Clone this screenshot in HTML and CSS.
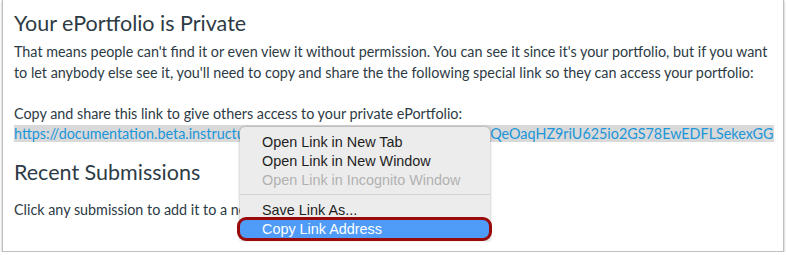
FILE: index.html
```html
<!DOCTYPE html>
<html lang="en">
<head>
    <meta charset="UTF-8">
    <meta name="viewport" content="width=device-width, initial-scale=1.0">
    <title>Your ePortfolio is Private</title>
    <link rel="stylesheet" href="styles.css">
</head>
<body>
    <div class="frame">
        <h2 class="title">Your ePortfolio is Private</h2>
        <p class="intro">That means people can't find it or even view it without permission. You can see it since it's your portfolio, but if you want to let anybody else see it, you'll need to copy and share the the following special link so they can access your portfolio:</p>
        <p class="share">Copy and share this link to give others access to your private ePortfolio:<br>
            <a class="link" href="#">https://documentation.beta.instructure.com/eportfolios/52857-14?verifier=QeOaqHZ9riU625io2GS78EwEDFLSekexGG</a>
        </p>
        <h2 class="subtitle">Recent Submissions</h2>
        <p class="hint">Click any submission to add it to a new page in your ePortfolio.</p>

        <div class="menu">
            <div class="item">Open Link in New Tab</div>
            <div class="item">Open Link in New Window</div>
            <div class="item disabled">Open Link in Incognito Window</div>
            <div class="separator"></div>
            <div class="item">Save Link As...</div>
            <div class="item selected">Copy Link Address</div>
        </div>
    </div>
</body>
</html>
```

FILE: styles.css
```css
body {
    margin: 0;
    background-color: #ffffff;
    font-family: Lato, "Open Sans", sans-serif;
    color: #2d3b45;
}
.frame {
    position: relative;
    margin-left: 2px;
    width: 758px;
    height: 251px;
    padding: 0 11px;
    background: #ffffff;
    border: 1px solid #bfbfbf;
    border-top: none;
    box-shadow: 0 1px 2px rgba(0, 0, 0, 0.35);
}
h2 {
    margin: 0;
    font-size: 21.5px;
    font-weight: 400;
    line-height: 26px;
}
.title {
    padding-top: 10px;
}
.subtitle {
    margin-top: 15px;
}
p {
    margin: 0;
    font-size: 14.35px;
    line-height: 21px;
}
.intro {
    margin-top: 5px;
}
.share {
    margin-top: 21px;
    line-height: 20px;
}
.hint {
    margin-top: 14px;
}
.link {
    background-color: #d9d9d9;
    color: #1a96d9;
    text-decoration: none;
    white-space: nowrap;
}
.menu {
    position: absolute;
    left: 237px;
    top: 127px;
    width: 250px;
    height: 113px;
    padding-top: 6px;
    box-sizing: border-box;
    background-color: #ececec;
    border-radius: 5px 5px 0 0;
    box-shadow: 0 0 3px rgba(0, 0, 0, 0.35);
    font-family: "Liberation Sans", Arial, sans-serif;
    font-size: 14.4px;
    color: #1e1e1e;
}
.item {
    height: 19px;
    line-height: 19px;
    padding-left: 22px;
    white-space: nowrap;
}
.item.disabled {
    color: #b1b1b1;
}
.separator {
    height: 1px;
    margin: 4px 0 6px;
    background-color: #d3d3d3;
}
.item.selected {
    margin: -3px -2px 0 -3px;
    height: 18px;
    line-height: 18px;
    background-color: #4f9bf8;
    color: #ffffff;
    border: 3px solid #9b0a0a;
    border-radius: 9px;
}
```
